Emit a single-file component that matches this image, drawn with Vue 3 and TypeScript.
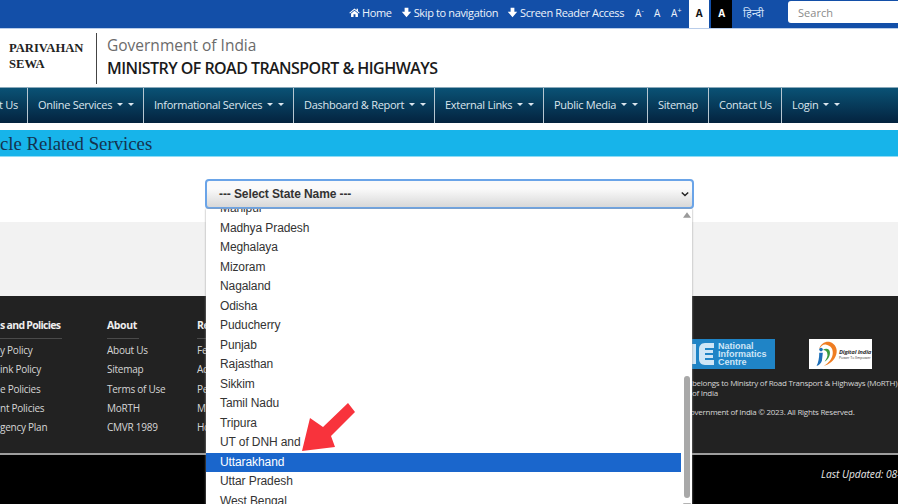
<script setup lang="ts">
interface NavItem { label: string; caret: boolean; width: number }
const navItems: NavItem[] = [
  { label: 'Online Services', caret: true, width: 116 },
  { label: 'Informational Services', caret: true, width: 150 },
  { label: 'Dashboard & Report', caret: true, width: 141 },
  { label: 'External Links', caret: true, width: 109 },
  { label: 'Public Media', caret: true, width: 104 },
  { label: 'Sitemap', caret: false, width: 61 },
  { label: 'Contact Us', caret: false, width: 73 },
  { label: 'Login', caret: true, width: 70 }
]
const states = ['Manipur','Madhya Pradesh','Meghalaya','Mizoram','Nagaland','Odisha','Puducherry','Punjab','Rajasthan','Sikkim','Tamil Nadu','Tripura','UT of DNH and','Uttarakhand','Uttar Pradesh','West Bengal']
const policies = ['y Policy','ink Policy','e Policies','nt Policies','gency Plan']
const about = ['About Us','Sitemap','Terms of Use','MoRTH','CMVR 1989']
const resources = ['Fe','Ac','Pe','M','Ho']
</script>

<template>
  <div class="page">
    <div class="topbar">
      <a class="tl home"><svg class="ic" viewBox="0 0 16 14"><path d="M8 1 0.5 7.4l.9 1L8 3l6.6 5.4.9-1L13 5.3V1.6h-2v2L8 1zM3 8.6V13.5h3.6V9.6h2.8v3.9H13V8.6L8 4.5 3 8.6z" fill="#fff"/></svg>Home</a>
      <a class="tl skip"><svg class="ic" viewBox="0 0 14 14"><path d="M4.6 1h4.8v5.2H13L7 13 1 6.2h3.6z" fill="#fff"/></svg>Skip to navigation</a>
      <a class="tl reader"><svg class="ic" viewBox="0 0 14 14"><path d="M4.6 1h4.8v5.2H13L7 13 1 6.2h3.6z" fill="#fff"/></svg>Screen Reader Access</a>
      <a class="tl sz s1">A<sup>-</sup></a>
      <a class="tl sz s2">A</a>
      <a class="tl sz s3">A<sup>+</sup></a>
      <span class="theme light">A</span>
      <span class="theme dark">A</span>
      <a class="tl hindi">हिन्दी</a>
      <div class="search">Search</div>
    </div>

    <header class="brand">
      <div class="sewa">PARIVAHAN<br />SEWA</div>
      <div class="divider"></div>
      <div class="ministry">
        <div class="gov">Government of India</div>
        <div class="morth">MINISTRY OF ROAD TRANSPORT &amp; HIGHWAYS</div>
      </div>
    </header>

    <nav class="nav">
      <div class="nav-cut"><span>t Us</span></div>
      <div v-for="n in navItems" :key="n.label" class="nav-item" :style="{ width: n.width + 'px' }">
        {{ n.label }}
        <span v-if="n.caret" class="carets"><i></i><i></i></span>
      </div>
    </nav>

    <div class="title-bar">cle Related Services</div>

    <section class="select-zone">
      <div class="select">
        <span>--- Select State Name ---</span>
        <svg class="chev" viewBox="0 0 10 7"><path d="M1 1.5l4 4 4-4" fill="none" stroke="#222" stroke-width="1.8"/></svg>
      </div>
      <div class="dropdown">
        <ul class="list">
          <li v-for="s in states" :key="s" :class="{ sel: s === 'Uttarakhand' }">{{ s }}</li>
        </ul>
        <div class="scroll">
          <svg class="up" viewBox="0 0 10 7"><path d="M5 0l5 7H0z" fill="#9a9a9a"/></svg>
          <div class="thumb"></div>
          <svg class="down" viewBox="0 0 10 7"><path d="M0 0h10L5 7z" fill="#9a9a9a"/></svg>
        </div>
      </div>
      <svg class="arrow" viewBox="0 0 60 55"><path d="M48 3 L55 12 L31 36 L35 47 L2 51 L10 18 L23 27 Z" fill="#f8333c"/></svg>
    </section>

    <div class="grey-band"></div>

    <footer class="footer">
      <div class="col col-pol">
        <h4>s and Policies</h4>
        <a v-for="p in policies" :key="p">{{ p }}</a>
      </div>
      <div class="col col-about">
        <h4>About</h4>
        <a v-for="p in about" :key="p">{{ p }}</a>
      </div>
      <div class="col col-res">
        <h4>Re</h4>
        <a v-for="p in resources" :key="p">{{ p }}</a>
      </div>
      <div class="col-right">
        <div class="logos">
          <div class="nic">
            <svg class="nic-mark" viewBox="0 0 26 30">
              <path d="M0 5h6v20H0z" fill="#cfe6f6"/>
              <path d="M24 4h-9c-4 0-6 3-6 6v10c0 3 2 6 6 6h9v-5h-9v-2h8v-3h-8v-2h8v-3h-8v-2h9z" fill="#cfe6f6"/>
            </svg>
            <span class="nic-text">National<br />Informatics<br />Centre</span>
          </div>
          <div class="digital">
            <svg viewBox="0 0 28 30" class="di-mark">
              <path d="M7 9C8 3 14 0 19 1c6 2 9 8 7 14-2 7-8 11-14 13 6-4 9-8 10-13 1-6-2-10-7-11-3-1-6 1-8 5z" fill="#ef7d22"/>
              <path d="M11 10c4-3 8-1 8 3 0 5-3 8-6 10 2-3 4-6 3-9 0-2-2-4-5-4z" fill="#3b9b3f"/>
              <path d="M7 13h4l-1 9c-1 3-3 5-6 6 2-4 3-9 3-15z" fill="#1d6fb8"/>
              <circle cx="9" cy="9.5" r="2" fill="#1d6fb8"/>
            </svg>
            <span class="di-text">Digital India<small>Power To Empower</small></span>
          </div>
        </div>
        <p class="own">belongs to Ministry of Road Transport &amp; Highways (MoRTH)<br />of India</p>
        <p class="copy">overnment of India © 2023. All Rights Reserved.</p>
      </div>
    </footer>
    <div class="bottom"><em>Last Updated: 08-</em></div>
  </div>
</template>

<style>
html, body { margin: 0; overflow: hidden; }
</style>

<style scoped>
.page { width: 898px; height: 504px; overflow: hidden; position: relative; background: #fff; font-family: "Open Sans", sans-serif; }

.topbar { height: 28px; background: #134fa8; color: #fff; display: flex; align-items: center; font-size: 11px; letter-spacing: -0.36px; padding-left: 349px; box-sizing: border-box; white-space: nowrap; }
.tl { display: flex; align-items: center; color: #eef3fb; padding-bottom: 3px; }
.ic { width: 11px; height: 11px; margin-right: 2px; }
.skip { margin-left: 9px; }
.reader { margin-left: 9px; }
.sz { font-size: 10px; min-width: 12px; letter-spacing: 0; }
.s1 { margin-left: 11px; }
.s2 { margin-left: 7px; }
.s3 { margin-left: 5px; }
.sz sup { font-size: 7px; line-height: 0; margin-top: -4px; }
.theme { height: 28px; display: flex; align-items: center; justify-content: center; font-weight: 700; font-size: 10px; padding-bottom: 3px; box-sizing: border-box; }
.theme.light { background: #fff; color: #111; margin-left: 6px; width: 20px; }
.theme.dark { background: #000; color: #fff; margin-left: 2px; width: 21px; }
.hindi { margin-left: 11px; font-family: "Noto Sans", "DejaVu Sans", sans-serif; font-size: 11px; letter-spacing: 0; color: #cfe0f7; min-width: 21px; }
.search { margin-left: 24px; flex: 1; height: 22px; margin-bottom: 4px; background: #fff; border-radius: 3px 0 0 3px; color: #8a8a8a; font-size: 11px; display: flex; align-items: center; padding-left: 10px; letter-spacing: 0; }

.brand { height: 59px; display: flex; align-items: center; padding-left: 9px; box-sizing: border-box; background: #fff; border-top: 1px solid #b9cdea; }
.sewa { font-family: "Liberation Serif", serif; font-weight: 700; font-size: 12.6px; line-height: 16px; color: #222; width: 87px; margin-top: -5px; }
.divider { width: 1px; height: 51px; background: #444; margin-top: 0; }
.ministry { margin-left: 10px; margin-top: -2px; }
.gov { font-size: 15.5px; line-height: 22px; color: #6b6b6b; }
.morth { font-size: 16px; line-height: 24px; color: #1b1b1b; font-weight: 600; letter-spacing: -0.55px; white-space: nowrap; }

.nav { height: 36px; display: flex; background: linear-gradient(#0a5275, #04233f); color: #dbe6ee; font-size: 11px; letter-spacing: -0.28px; white-space: nowrap; border-top: 1px solid #8aa9ba; box-sizing: border-box; }
.nav-cut { width: 27px; display: flex; align-items: center; justify-content: flex-end; padding: 0 9px 2px 0; box-sizing: border-box; overflow: hidden; }
.nav-item { display: flex; align-items: center; padding: 0 0 2px 10px; box-sizing: border-box; border-left: 1px solid #b6c6d1; gap: 5px; flex: none; }
.carets { display: inline-flex; gap: 5px; }
.carets i { width: 0; height: 0; border-left: 3px solid transparent; border-right: 3px solid transparent; border-top: 3px solid #dbe6ee; }

.title-bar { margin-top: 7px; height: 26px; background: #17b4ea; font-family: "Liberation Serif", serif; font-size: 18.8px; line-height: 27px; color: #14324f; border-bottom: 1px solid #8fdcf5; }

.select-zone { height: 65px; position: relative; box-sizing: border-box; padding: 22px 0 0 205px; }
.select { width: 489px; height: 30px; box-sizing: border-box; border: 2px solid #6aa4e8; border-radius: 4px; background: linear-gradient(#fafafa 30%, #d8d8d8); display: flex; align-items: center; justify-content: space-between; padding: 0 3px 0 12px; font-family: "Liberation Sans", sans-serif; font-size: 12px; font-weight: 700; letter-spacing: -0.1px; color: #333; }
.chev { width: 8px; height: 6px; }

.dropdown { position: absolute; z-index: 3; left: 206px; top: 52px; width: 486px; height: 296px; background: #fff; box-shadow: 0 0 2px #999; display: flex; overflow: hidden; }
.list { list-style: none; margin: -10px 0 0; padding: 0; width: 475px; font-family: "Liberation Sans", sans-serif; font-size: 12px; letter-spacing: -0.1px; color: #333; flex: none; }
.list li { height: 19.5px; line-height: 19.5px; padding-left: 14px; white-space: nowrap; }
.list li.sel { background: #1a66cc; color: #fff; }
.scroll { flex: 1; position: relative; display: flex; flex-direction: column; align-items: center; }
.up { width: 8px; height: 6px; margin-top: 3px; flex: none; }
.thumb { width: 6px; height: 122px; margin-top: 158px; background: #a8a8a8; border-radius: 3px; flex: none; }
.down { width: 8px; height: 6px; margin-top: 5px; flex: none; }

.arrow { position: absolute; z-index: 4; left: 300px; top: 243px; width: 60px; height: 55px; }

.grey-band { height: 74px; background: #f2f2f2; }

.footer { height: 159px; background: #222; color: #d6d6d6; font-size: 10px; display: flex; box-sizing: border-box; border-bottom: 2px solid #9e9e9e; position: relative; }
.col { padding-top: 21px; display: flex; flex-direction: column; flex: none; white-space: nowrap; letter-spacing: -0.25px; }
.col h4 { margin: 0 0 2px; font-size: 10.5px; line-height: 16px; font-weight: 700; color: #eee; padding-bottom: 5px; border-bottom: 1px solid #4a4a4a; letter-spacing: -0.4px; }
.col a { height: 19.3px; line-height: 19px; }
.col-pol { width: 107px; padding-right: 45px; box-sizing: border-box; }
.col-pol h4 { letter-spacing: -0.7px; }
.col-about { width: 90px; }
.col-about h4 { width: 32px; }
.col-res { width: 484px; }
.col-right { position: absolute; left: 690px; top: 43px; width: 208px; overflow: hidden; font-size: 8px; letter-spacing: -0.27px; white-space: nowrap; }
.logos { display: flex; align-items: center; height: 30px; }
.nic { width: 85px; height: 30px; background: #1f84c6; display: flex; align-items: center; color: #cfe6f6; flex: none; }
.nic-mark { width: 26px; height: 30px; margin-right: 2px; flex: none; }
.nic-text { font-family: "Liberation Sans", sans-serif; font-weight: 700; font-size: 9px; line-height: 8px; letter-spacing: 0; }
.digital { margin-left: 34px; width: 63px; height: 30px; background: #fff; display: flex; align-items: center; color: #333; flex: none; }
.di-mark { width: 25px; height: 27px; margin-left: 4px; flex: none; }
.di-text { font-size: 6px; line-height: 6px; font-style: italic; font-weight: 700; letter-spacing: -0.2px; margin-left: 1px; }
.di-text small { display: block; font-size: 3.5px; line-height: 5px; font-weight: 400; font-style: normal; letter-spacing: 0; }
.own { margin: 9px 0 0 2px; line-height: 10px; }
.copy { margin: 9px 0 0; line-height: 10px; }
.bottom { height: 49px; background: #000; color: #e8e8e8; font-size: 10.2px; padding-left: 821px; line-height: 38px; white-space: nowrap; overflow: hidden; }
</style>
